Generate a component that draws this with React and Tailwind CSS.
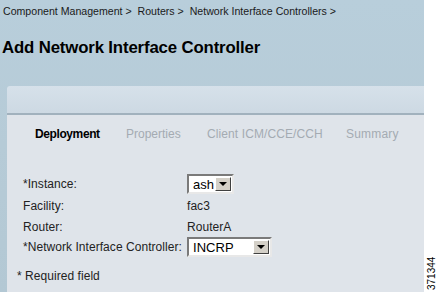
import React from "react";

function Select({ value, width }) {
  return (
    <div
      className="flex items-stretch bg-white border-2 border-t-[#7a7a7a] border-l-[#7a7a7a] border-b-[#e8e8e8] border-r-[#e8e8e8] h-[20px]"
      style={{ width }}
    >
      <div className="flex-1 flex items-center pl-[4px] text-[13px] leading-none text-black">{value}</div>
      <div className="w-[16px] my-[1px] mr-[1px] bg-[#d4d0c8] border border-t-white border-l-white border-b-[#404040] border-r-[#404040] flex items-center justify-center">
        <svg width="8" height="4" viewBox="0 0 8 4"><path d="M0 0h8L4 4z" fill="#000" /></svg>
      </div>
    </div>
  );
}

export default function App() {
  return (
    <div className="w-[436px] h-[292px] flex bg-white overflow-hidden" style={{ fontFamily: '"Liberation Sans", Arial, sans-serif' }}>
      <div className="w-[424px] h-full flex flex-col bg-gradient-to-b from-[#b8cedb] via-[#b6cbd7] to-[#b3c8d4]">
        <div className="pl-[3px] pt-[4px] text-[10.6px] leading-[14px] text-[#1a1a1a]">
          Component Management &gt;&nbsp; Routers &gt;&nbsp; Network Interface Controllers &gt;
        </div>
        <div className="pl-[2px] mt-[20px] text-[16.8px] font-bold leading-[20px] text-black tracking-[-0.15px]">
          Add Network Interface Controller
        </div>
        <div className="ml-[7px] mt-[28px] flex-1 flex flex-col rounded-tl-[3px] overflow-hidden">
          <div className="h-[29px] bg-gradient-to-b from-[#d6e1ea] to-[#cdd9e3] border-b-2 border-[#a1b1bd]"></div>
          <div className="flex-1 bg-[#dfe4ea] flex flex-col">
            <div className="flex items-center h-[36px] pl-[28px] text-[12px] pt-[2px]">
              <span className="font-bold text-black tracking-[-0.4px] w-[91px]">Deployment</span>
              <span className="text-[#a4abb2] w-[81px]">Properties</span>
              <span className="text-[#a4abb2] w-[139px] tracking-[0.1px]">Client ICM/CCE/CCH</span>
              <span className="text-[#a4abb2] tracking-[0.2px]">Summary</span>
            </div>
            <div className="flex flex-col pl-[16px] mt-[22px] text-[12px] text-[#222] tracking-[0.05px]">
              <div className="flex items-center h-[22px]">
                <span className="w-[164px]">*Instance:</span>
                <Select value="ash" width={47} />
              </div>
              <div className="flex items-center h-[22px]">
                <span className="w-[164px]">Facility:</span>
                <span>fac3</span>
              </div>
              <div className="flex items-center h-[19px]">
                <span className="w-[164px]">Router:</span>
                <span>RouterA</span>
              </div>
              <div className="flex items-center h-[22px]">
                <span className="w-[164px] whitespace-nowrap">*Network Interface Controller:</span>
                <Select value="INCRP" width={85} />
              </div>
              <div className="mt-[11px] -ml-[6px] text-[12px] leading-[14px]">* Required field</div>
            </div>
          </div>
        </div>
      </div>
      <div className="flex-1 relative">
        <div className="absolute left-[4px] bottom-[2px] text-[10px] leading-none text-black whitespace-nowrap origin-bottom-left -rotate-90 translate-x-[9px]">
          371344
        </div>
      </div>
    </div>
  );
}
